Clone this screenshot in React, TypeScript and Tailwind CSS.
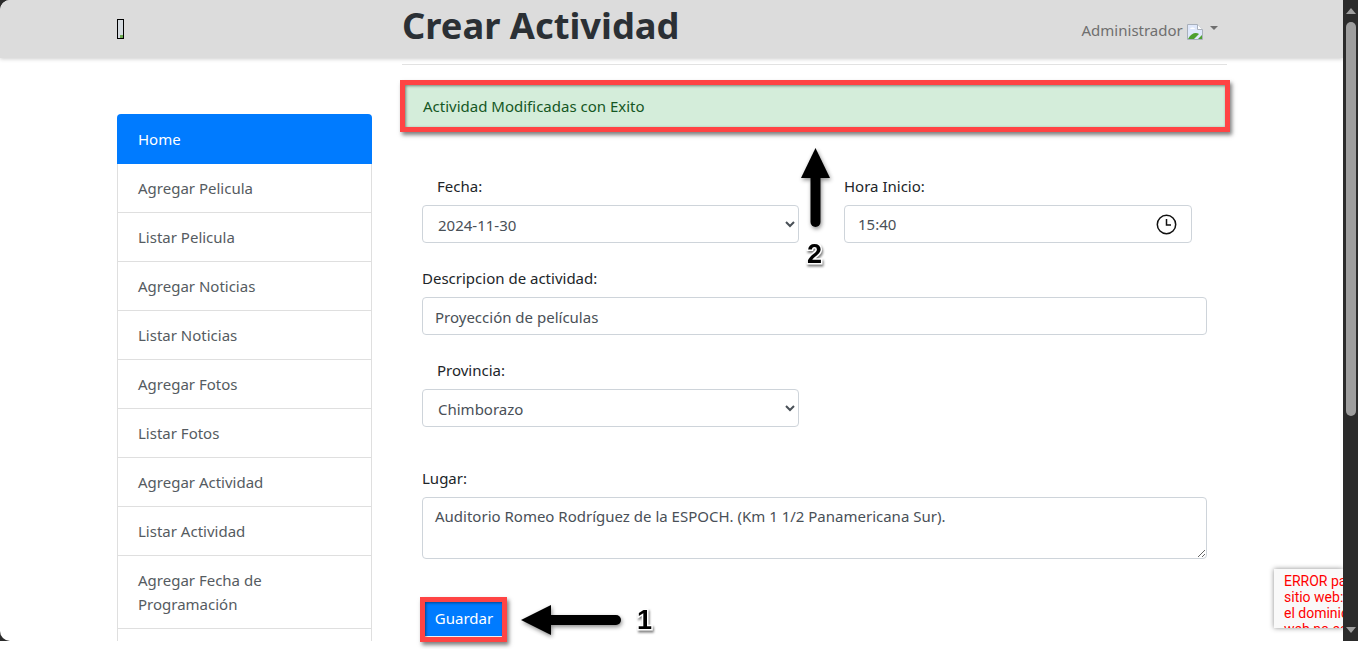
import { Fragment } from "react";

const menu = [
  "Agregar Pelicula",
  "Listar Pelicula",
  "Agregar Noticias",
  "Listar Noticias",
  "Agregar Fotos",
  "Listar Fotos",
  "Agregar Actividad",
  "Listar Actividad",
];

const BrokenImage = () => (
  <svg width="16" height="16" viewBox="0 0 16 16" className="block">
    <path d="M0.5 0.5H10.5L15.5 5.5V15.5H0.5Z" fill="#dfe8fb" stroke="#a9b0bb" />
    <path d="M10.5 0.5V5.5H15.5" fill="#fff" stroke="#a9b0bb" />
    <path d="M1 15C4 9 9 8 12 10L7 15Z" fill="#4ea02f" />
    <path d="M11 15L15 11V15Z" fill="#4ea02f" />
    <path d="M3 5C4 3 7 3 8 5Z" fill="#fff" />
  </svg>
);

const Clock = () => (
  <svg width="21" height="21" viewBox="0 0 21 21" fill="none" stroke="#111" className="block">
    <circle cx="10.5" cy="10.5" r="9.2" strokeWidth="1.5" />
    <path d="M10.5 5V11H15" strokeWidth="1.5" />
  </svg>
);

const inputClass =
  "h-[38px] rounded-[4px] border border-[#ced4da] bg-white text-[#495057] text-[15px]";

const numberStyle = {
  fontFamily: '"Liberation Sans", sans-serif',
  WebkitTextStroke: "3px #fff",
  paintOrder: "stroke fill",
  filter: "drop-shadow(1px 2px 1px rgba(0,0,0,0.5))",
} as const;

export default function App() {
  return (
    <div
      className="relative h-[649px] w-full overflow-hidden bg-white text-[15px] text-[#212529]"
      style={{ fontFamily: '"Noto Sans", sans-serif' }}
    >
      <div className="flex h-[641px] bg-[#2b2b2b]">
        <div className="flex-1 overflow-hidden rounded-l-[10px] bg-white">
          {/* navbar */}
          <div className="relative z-10 flex h-[58px] items-center bg-[#dcdcdc] pl-[117px] shadow-[0_1px_4px_rgba(0,0,0,0.2)]">
            <div className="flex h-[20px] w-[7px] items-end justify-end border border-black bg-[#d5dbe0]">
              <div className="h-[3px] w-[3px] bg-[#6aa84f]" />
            </div>
            <h1 className="ml-[278px] pb-[8px] text-[36.3px] leading-none font-bold text-[#2b3035]">
              Crear Actividad
            </h1>
            <div className="ml-[402px] flex items-center pt-[2px] text-[#6f6f6f]">
              <span>Administrador</span>
              <span className="mt-[3px] ml-[4px]">
                <BrokenImage />
              </span>
              <span className="mb-[4px] ml-[7px] h-0 w-0 border-x-[4px] border-t-[4px] border-x-transparent border-t-[#6f6f6f]" />
            </div>
          </div>

          <div className="flex gap-[30px] pl-[117px]">
            {/* side menu */}
            <div className="mt-[56px] w-[255px] shrink-0">
              <div className="flex h-[50px] items-center rounded-t-[4px] bg-[#007bff] px-[21px] text-white">
                Home
              </div>
              {menu.map((item) => (
                <div
                  key={item}
                  className="flex h-[49px] items-center border-x border-b border-[#dfdfdf] px-[20px] text-[#555b61]"
                >
                  {item}
                </div>
              ))}
              <div className="h-[73px] border-x border-b border-[#dfdfdf] px-[20px] pt-[12px] leading-[24px] text-[#555b61]">
                Agregar Fecha de
                <br />
                Programación
              </div>
              <div className="h-[49px] border-x border-[#dfdfdf]" />
            </div>

            {/* form */}
            <div className="w-[825px] shrink-0">
              <div className="mt-[6px] border-t border-[#e2e2e2]" />
              <div className="mt-[16px] flex h-[50px] items-center border border-[#c3e6cb] bg-[#d4edda] px-[20px] text-[#155724]">
                Actividad Modificadas con Exito
              </div>

              <div className="pl-[20px]">
                <div className="mt-[43px] flex gap-[45px]">
                  <div className="w-[377px]">
                    <label className="block pl-[15px] leading-[24px]">Fecha:</label>
                    <select className={`${inputClass} mt-[7px] w-full pt-[2px] pr-[4px] pl-[11px]`} defaultValue="2024-11-30">
                      <option>2024-11-30</option>
                    </select>
                  </div>
                  <div className="w-[348px]">
                    <label className="block leading-[24px]">Hora Inicio:</label>
                    <div className={`${inputClass} mt-[7px] flex items-center justify-between pr-[14px] pl-[13px]`}>
                      <span>15:40</span>
                      <Clock />
                    </div>
                  </div>
                </div>

                <label className="mt-[23px] block leading-[24px]">Descripcion de actividad:</label>
                <div className={`${inputClass} mt-[7px] flex w-[785px] items-center px-[12px] pt-[2px]`}>
                  Proyección de películas
                </div>

                <label className="mt-[23px] block pl-[15px] leading-[24px]">Provincia:</label>
                <select className={`${inputClass} mt-[7px] block w-[377px] pt-[2px] pr-[4px] pl-[11px]`} defaultValue="Chimborazo">
                  <option>Chimborazo</option>
                </select>

                <label className="mt-[39px] block leading-[24px]">Lugar:</label>
                <textarea
                  className={`${inputClass} mt-[7px] block !h-[62px] w-[785px] px-[12px] py-[6px] leading-[24px]`}
                  defaultValue="Auditorio Romeo Rodríguez de la ESPOCH. (Km 1 1/2 Panamericana Sur)."
                />

                <button className="mt-[42px] ml-[3px] flex h-[35px] w-[78px] items-center justify-center bg-[#007bff] pb-[1px] text-white">
                  Guardar
                </button>
              </div>
            </div>
          </div>
        </div>

        {/* scrollbar */}
        <div className="relative z-20 flex w-[15px] shrink-0 flex-col items-center bg-[#2b2b2b]">
          <span className="mt-[8px] h-0 w-0 border-x-[5px] border-b-[6px] border-x-transparent border-b-[#9e9e9e]" />
          <div className="mt-[8px] h-[394px] w-[10px] rounded-[5px] bg-[#9e9e9e]" />
          <span className="mt-auto mb-[8px] h-0 w-0 border-x-[5px] border-t-[6px] border-x-transparent border-t-[#9e9e9e]" />
        </div>
      </div>

      {/* recaptcha error badge */}
      <div className="absolute top-[569px] left-[1274px] z-10 h-[59px] w-[69px] overflow-hidden bg-[#f9f9f9] pt-[4px] pl-[10px] shadow-[0_0_5px_rgba(0,0,0,0.45)]">
        <p className="text-[14px] leading-[16px] whitespace-nowrap text-[#ff0000]" style={{ fontFamily: "Roboto, sans-serif" }}>
          {["ERROR para el", "sitio web: el", "el dominio del", "web no es"].map((line) => (
            <Fragment key={line}>
              {line}
              <br />
            </Fragment>
          ))}
        </p>
      </div>

      {/* annotations */}
      <div className="absolute top-[80px] left-[400px] z-30 h-[52px] w-[830px] border-[5px] border-[#ff4444] shadow-[2px_3px_4px_rgba(0,0,0,0.5),inset_1px_1px_3px_rgba(0,0,0,0.45)]" />
      <div className="absolute top-[597px] left-[420px] z-30 h-[45px] w-[87px] border-[5px] border-[#ff4444] shadow-[2px_3px_4px_rgba(0,0,0,0.5),inset_1px_1px_3px_rgba(0,0,0,0.45)]" />

      <svg className="absolute top-[145px] left-[795px] z-30" width="40" height="90" viewBox="0 0 40 90">
        <g style={{ filter: "drop-shadow(1px 2px 2px rgba(0,0,0,0.45))" }}>
          <path d="M20.5 3L35 33H6Z" fill="#000" />
          <path d="M20.5 30V77" stroke="#000" strokeWidth="10" strokeLinecap="round" />
        </g>
      </svg>
      <svg className="absolute top-[600px] left-[515px] z-30" width="112" height="40" viewBox="0 0 112 40">
        <g style={{ filter: "drop-shadow(1px 2px 2px rgba(0,0,0,0.45))" }}>
          <path d="M6 20L36 5V35Z" fill="#000" />
          <path d="M33 20H101" stroke="#000" strokeWidth="10" strokeLinecap="round" />
        </g>
      </svg>
      <span className="absolute top-[238px] left-[807px] z-30 text-[27px] leading-[32px] font-bold text-black" style={numberStyle}>
        2
      </span>
      <span className="absolute top-[604px] left-[637px] z-30 text-[27px] leading-[32px] font-bold text-black" style={numberStyle}>
        1
      </span>
    </div>
  );
}
